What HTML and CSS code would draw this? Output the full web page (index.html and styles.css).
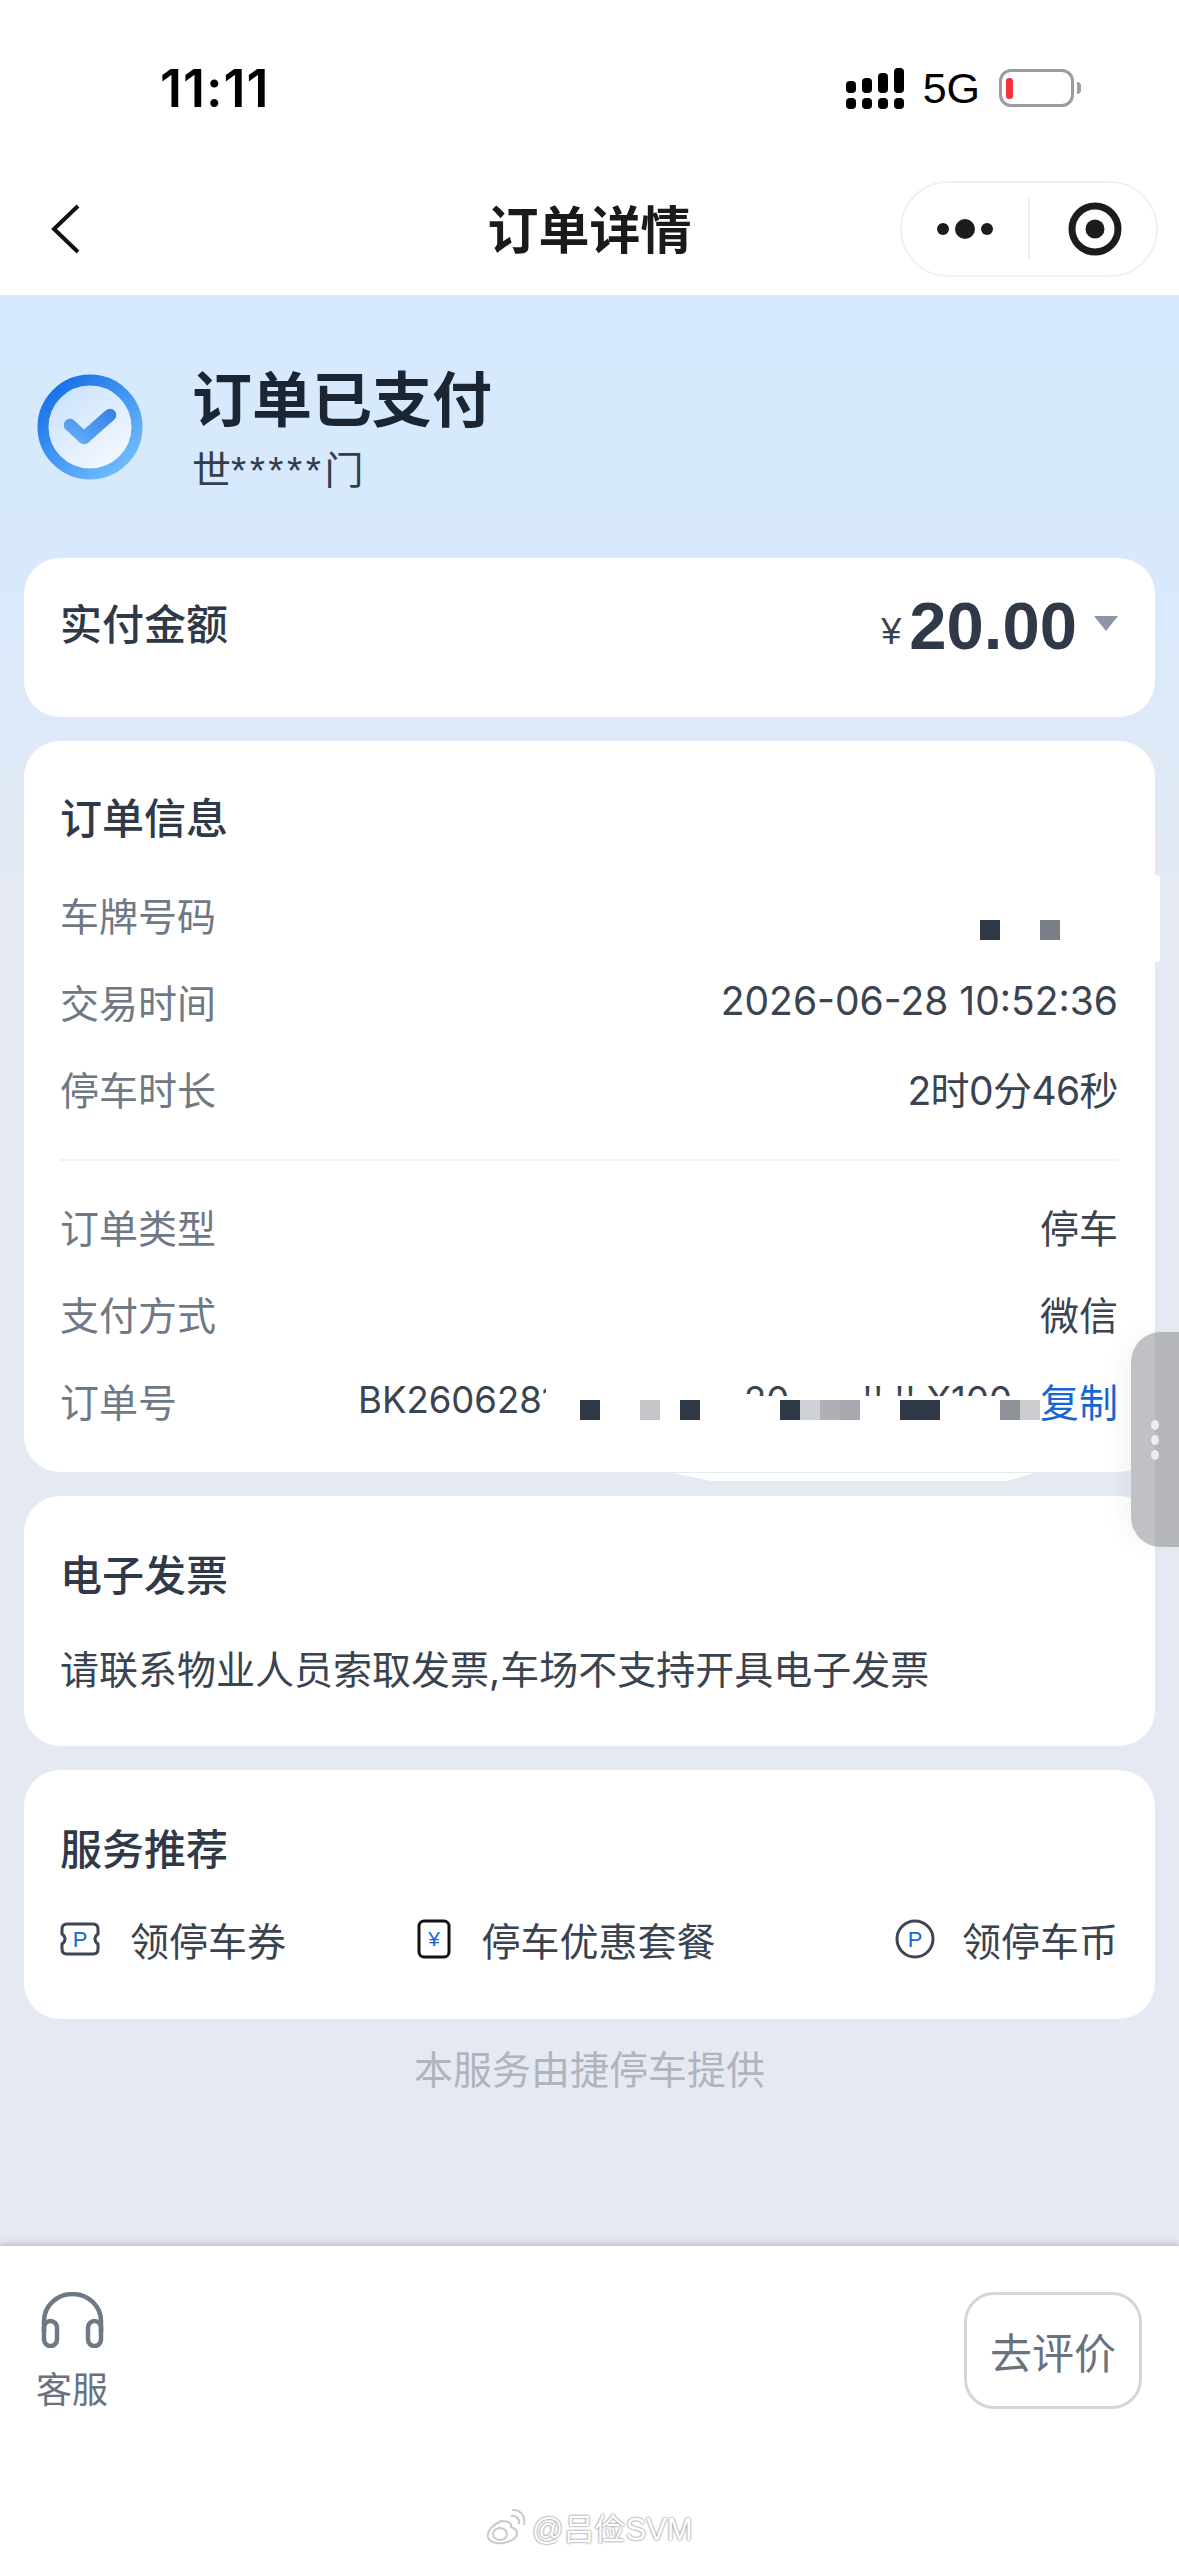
FILE: index.html
```html
<!DOCTYPE html>
<html lang="zh-CN">

<head>
    <meta charset="utf-8" />
    <meta name="viewport" content="width=device-width, initial-scale=1" />
    <title>订单详情</title>
    <link rel="stylesheet" href="styles.css">
</head>

<body>
    <div class="page">
        <header class="top">
            <div class="status">
                <div class="clock">11:11</div>
                <div class="status-right">
                    <svg class="signal" width="58" height="41" viewBox="0 0 58 41">
                        <rect x="0" y="30" width="10" height="11" rx="4" />
                        <rect x="16" y="30" width="10" height="11" rx="4" />
                        <rect x="32" y="30" width="10" height="11" rx="4" />
                        <rect x="48" y="30" width="10" height="11" rx="4" />
                        <rect x="0" y="13" width="10" height="12" rx="4" />
                        <rect x="16" y="10" width="10" height="15" rx="4" />
                        <rect x="32" y="5" width="10" height="20" rx="4" />
                        <rect x="48" y="0" width="10" height="25" rx="4" />
                    </svg>
                    <div class="network">5G</div>
                    <div class="battery">
                        <div class="battery-body"><div class="battery-level"></div></div>
                        <div class="battery-nub"></div>
                    </div>
                </div>
            </div>
            <nav class="nav">
                <svg class="back" width="30" height="50" viewBox="0 0 30 50">
                    <path d="M27 2 L3 25 L27 48" />
                </svg>
                <div class="nav-title">订单详情</div>
                <div class="capsule">
                    <svg class="capsule-icon" width="64" height="24" viewBox="0 0 64 24">
                        <circle cx="6" cy="12" r="6" />
                        <circle cx="28" cy="12" r="10" />
                        <circle cx="50" cy="12" r="6" />
                    </svg>
                    <div class="capsule-line"></div>
                    <svg class="capsule-icon" width="54" height="54" viewBox="0 0 54 54">
                        <circle class="ring" cx="27" cy="27" r="23" />
                        <circle cx="27" cy="27" r="9.5" />
                    </svg>
                </div>
            </nav>
        </header>

        <main class="content">
            <section class="hero">
                <svg class="hero-icon" width="106" height="106" viewBox="0 0 106 106">
                    <defs>
                        <linearGradient id="ringFill" x1="0.15" y1="0.1" x2="0.85" y2="0.9">
                            <stop offset="0" stop-color="#1b74ea" />
                            <stop offset="1" stop-color="#6dbafb" />
                        </linearGradient>
                        <linearGradient id="innerFill" x1="0.2" y1="0.1" x2="0.8" y2="0.9">
                            <stop offset="0" stop-color="#cbe2fd" />
                            <stop offset="1" stop-color="#f4f9ff" />
                        </linearGradient>
                        <linearGradient id="tickFill" x1="1" y1="0" x2="0" y2="1">
                            <stop offset="0" stop-color="#3a85e6" />
                            <stop offset="1" stop-color="#5eadf6" />
                        </linearGradient>
                    </defs>
                    <circle cx="53" cy="53" r="47" fill="url(#innerFill)" stroke="url(#ringFill)" stroke-width="11" />
                    <path d="M33 51 L47 64 L73 41" fill="none" stroke="url(#tickFill)" stroke-width="12.5" stroke-linecap="round" stroke-linejoin="round" />
                </svg>
                <div class="hero-text">
                    <div class="hero-title">订单已支付</div>
                    <div class="hero-sub">世<span class="stars">*****</span>门</div>
                </div>
            </section>

            <section class="card amount-card">
                <div class="card-title">实付金额</div>
                <div class="amount">
                    <span class="yen">¥</span>
                    <span class="amount-num">20.00</span>
                    <span class="caret"></span>
                </div>
            </section>

            <section class="card info-card">
                <div class="card-title">订单信息</div>
                <div class="rows">
                    <div class="row"><span class="label">车牌号码</span></div>
                    <div class="row"><span class="label">交易时间</span><span class="value">2026-06-28 10:52:36</span></div>
                    <div class="row"><span class="label">停车时长</span><span class="value value-tight">2时0分46秒</span></div>
                </div>
                <div class="divider"></div>
                <div class="rows">
                    <div class="row"><span class="label">订单类型</span><span class="value">停车</span></div>
                    <div class="row"><span class="label">支付方式</span><span class="value">微信</span></div>
                    <div class="row">
                        <span class="label label-order">订单号</span>
                        <span class="order-start">BK2606281</span>
                        <span class="order-cut">20 . . . '' '' X100</span>
                        <span class="copy">复制</span>
                    </div>
                </div>
            </section>

            <section class="card invoice-card">
                <div class="card-title">电子发票</div>
                <div class="card-line">请联系物业人员索取发票,车场不支持开具电子发票</div>
            </section>

            <section class="card service-card">
                <div class="card-title">服务推荐</div>
                <div class="services">
                    <div class="service">
                        <svg width="40" height="34" viewBox="0 0 40 34">
                            <path class="icon-line" d="M7 2 H33 Q38 2 38 7 V12 Q35 14 35 17 Q35 20 38 22 V27 Q38 32 33 32 H7 Q2 32 2 27 V22 Q5 20 5 17 Q5 14 2 12 V7 Q2 2 7 2 Z" />
                            <text class="icon-mark" x="20" y="25" font-size="22">P</text>
                        </svg>
                        <span class="service-name">领停车券</span>
                    </div>
                    <div class="service service-mid">
                        <svg width="34" height="40" viewBox="0 0 34 40">
                            <rect class="icon-dark" x="2" y="2" width="30" height="36" rx="5" />
                            <text class="icon-mark" x="17" y="27" font-size="21">¥</text>
                        </svg>
                        <span class="service-name">停车优惠套餐</span>
                    </div>
                    <div class="service service-last">
                        <svg width="40" height="40" viewBox="0 0 40 40">
                            <circle class="icon-line" cx="20" cy="20" r="18" />
                            <text class="icon-mark" x="20" y="28" font-size="22">P</text>
                        </svg>
                        <span class="service-name">领停车币</span>
                    </div>
                </div>
            </section>

            <div class="provider">本服务由捷停车提供</div>
        </main>

        <footer class="bar">
            <div class="kefu">
                <svg width="63" height="56" viewBox="0 0 63 56">
                    <path d="M3 40 V29 A28.5 27 0 0 1 60 29 V40" />
                    <rect x="3" y="29" width="13" height="25" rx="6.5" />
                    <rect x="47" y="29" width="13" height="25" rx="6.5" />
                </svg>
                <span>客服</span>
            </div>
            <div class="rate">去评价</div>
            <div class="watermark">
                <svg width="42" height="36" viewBox="0 0 42 36">
                    <path d="M16 12 C8 16 2 22 3 28 C4 33 11 35 18 34 C26 33 32 29 32 24 C32 20 28 19 26 18 C27 14 24 12 16 12 Z" />
                    <ellipse cx="15" cy="25" rx="7" ry="6" />
                    <path d="M26 7 C31 6 35 10 34 15" />
                    <path d="M27 1 C35 0 41 7 39 16" />
                </svg>
                <span>@吕俭SVM</span>
            </div>
        </footer>

        <!-- mosaic left on the screenshot, sits over the rows -->
        <svg class="mosaic mosaic-plate" width="80" height="20" viewBox="0 0 80 20">
            <rect x="0" width="20" height="20" fill="#2f3947" />
            <rect x="60" width="20" height="20" fill="#797e87" />
        </svg>
        <svg class="mosaic mosaic-order" width="460" height="20" viewBox="0 0 460 20">
            <rect x="0" width="20" height="20" fill="#2f3947" />
            <rect x="60" width="20" height="20" fill="#c3c5c9" />
            <rect x="100" width="20" height="20" fill="#2f3947" />
            <rect x="200" width="20" height="20" fill="#2f3947" />
            <rect x="220" width="20" height="20" fill="#cdd0d4" />
            <rect x="240" width="20" height="20" fill="#aeb0b6" />
            <rect x="260" width="20" height="20" fill="#a6a9af" />
            <rect x="320" width="40" height="20" fill="#2f3947" />
            <rect x="420" width="20" height="20" fill="#8f9298" />
            <rect x="440" width="20" height="20" fill="#cbcdd1" />
        </svg>
        <div class="patch-plate"></div>
        <div class="patch-order"></div>

        <div class="handle">
            <span></span>
            <span></span>
            <span></span>
        </div>
    </div>
</body>

</html>
```

FILE: styles.css
```css
* {
    box-sizing: border-box;
}

body {
    margin: 0;
    background: #fff;
    font-family: Inter, "Noto Sans CJK SC", sans-serif;
    color: #3a4350;
}

.page {
    position: relative;
    display: flex;
    flex-direction: column;
    width: 1179px;
    height: 2556px;
    overflow: hidden;
}

/* status bar + title bar */
.top {
    height: 295px;
    background: #fff;
}

.status {
    display: flex;
    justify-content: space-between;
    align-items: center;
    height: 176px;
    padding: 0 98px 0 160px;
    color: #000;
}

.clock {
    font-size: 52px;
    font-weight: 600;
    letter-spacing: 1px;
}

.status-right {
    display: flex;
    align-items: center;
}

.network {
    margin: 0 19px 0 19px;
    font-family: "Liberation Sans", sans-serif;
    font-size: 43px;
}

.battery {
    display: flex;
    align-items: center;
    gap: 3px;
}

.battery-body {
    display: flex;
    align-items: center;
    width: 75px;
    height: 38px;
    padding-left: 4px;
    border: 3px solid #9c9c9e;
    border-radius: 12px;
}

.battery-level {
    width: 7px;
    height: 21px;
    border-radius: 3px;
    background: #f0343c;
}

.battery-nub {
    width: 4px;
    height: 12px;
    border-radius: 0 4px 4px 0;
    background: #9c9c9e;
}

.nav {
    display: grid;
    grid-template-columns: 1fr auto 1fr;
    align-items: center;
    height: 106px;
    padding: 0 21px;
}

.back {
    margin-left: 30px;
}

.back path {
    fill: none;
    stroke: #111;
    stroke-width: 4;
}

.nav-title {
    margin-bottom: 5px;
    font-size: 51px;
    font-weight: 700;
    color: #1a1a1a;
}

.capsule {
    display: flex;
    align-items: center;
    justify-self: end;
    width: 258px;
    height: 96px;
    padding-left: 35px;
    border: 2px solid #f0f0f0;
    border-radius: 48px;
}

.capsule-icon {
    fill: #1c1c1c;
}

.capsule-icon .ring {
    fill: none;
    stroke: #1c1c1c;
    stroke-width: 7;
}

.capsule-line {
    width: 2px;
    height: 62px;
    margin: 0 38px 0 27px;
    background: #efefef;
}

/* main area */
.content {
    flex: 1;
    padding: 0 24px;
    background: linear-gradient(#d7e9fe 0, #d8e9fd 265px, #e5e9f2 620px);
}

.hero {
    display: flex;
    align-items: center;
    gap: 49px;
    height: 263px;
    padding-left: 13px;
}

.hero-text {
    padding-top: 9px;
}

.hero-title {
    margin-bottom: 6px;
    font-size: 60px;
    font-weight: 700;
    line-height: 72px;
    color: #1c2633;
}

.hero-sub {
    font-size: 39px;
    line-height: 56px;
    color: #333d4c;
}

.stars {
    letter-spacing: 3.5px;
    font-family: "Liberation Sans", sans-serif;
}

.card {
    margin-bottom: 24px;
    padding: 53px 37px 52px 36px;
    border-radius: 36px;
    background: #fff;
}

.card-title {
    font-size: 42px;
    font-weight: 500;
    line-height: 50px;
    color: #2f3947;
}

.card-line {
    margin-top: 44px;
    font-size: 39px;
    line-height: 50px;
}

.amount-card {
    display: flex;
    justify-content: space-between;
    align-items: flex-start;
    height: 159px;
    padding-top: 42px;
    padding-bottom: 0;
}

.amount {
    display: flex;
    align-items: center;
    height: 50px;
}

.yen {
    margin: 14px 8px 0 0;
    font-size: 36px;
    font-family: "Liberation Sans", sans-serif;
}

.amount-num {
    font-family: "Liberation Sans", sans-serif;
    font-size: 67px;
    font-weight: 700;
    color: #2f3947;
}

.caret {
    width: 0;
    height: 0;
    margin: 0 0 4px 17px;
    border-top: 15px solid #8c96a5;
    border-left: 12.5px solid transparent;
    border-right: 12.5px solid transparent;
}

.info-card {
    padding-bottom: 29px;
}

.rows {
    padding-top: 26px;
}

.divider + .rows {
    padding-top: 21px;
}

.row {
    display: flex;
    justify-content: space-between;
    align-items: center;
    height: 87px;
    font-size: 39px;
}

.label {
    color: #6f7986;
}

.value {
    color: #3a4350;
}

.value-tight {
    letter-spacing: -0.6px;
}

.divider {
    height: 2px;
    margin-top: 28px;
    background: #f1f2f5;
}

.label-order {
    width: 298px;
    flex: none;
}

.order-start {
    width: 188px;
    flex: none;
    overflow: hidden;
    font-size: 36.5px;
    white-space: nowrap;
}

.order-cut {
    flex: 1;
    margin-left: 198px;
    overflow: hidden;
    white-space: nowrap;
    font-size: 36.5px;
    clip-path: inset(0 0 58% 0);
}

.copy {
    flex: none;
    color: #1666d3;
}

.invoice-card {
    padding-top: 55px;
    padding-bottom: 51px;
}

.service-card {
    padding-top: 55px;
    padding-bottom: 55px;
}

.services {
    display: flex;
    justify-content: space-between;
    margin-top: 39px;
}

.service {
    display: flex;
    align-items: center;
    gap: 30px;
    height: 50px;
    font-size: 39px;
}

.service-mid {
    margin-right: 48px;
}

.service-last {
    gap: 27px;
}

.icon-line,
.icon-dark {
    fill: #fff;
    stroke: #3d4654;
    stroke-width: 3;
}

.icon-dark {
    stroke: #111;
    stroke-width: 3;
}

.icon-mark {
    fill: #1666d3;
    font-family: "Liberation Sans", sans-serif;
    text-anchor: middle;
}

.provider {
    margin-top: 26px;
    font-size: 39px;
    line-height: 50px;
    text-align: center;
    color: #b0b4bc;
}

/* bottom bar */
.bar {
    position: relative;
    display: flex;
    justify-content: space-between;
    align-items: flex-start;
    height: 310px;
    padding: 46px 37px 0 36px;
    background: #fff;
    box-shadow: 0 -2px 6px rgba(60, 60, 70, 0.28);
}

.kefu {
    display: flex;
    flex-direction: column;
    align-items: center;
    gap: 22px;
    font-size: 36px;
    line-height: 40px;
    color: #6a7280;
}

.kefu svg {
    fill: none;
    stroke: #6f7986;
    stroke-width: 4.5;
}

.rate {
    display: flex;
    justify-content: center;
    align-items: center;
    width: 178px;
    height: 117px;
    border: 3px solid #d5d6d8;
    border-radius: 30px;
    font-size: 42px;
    color: #6a7280;
}

.watermark {
    position: absolute;
    top: 258px;
    left: 485px;
    display: flex;
    align-items: center;
    gap: 5px;
    font-size: 31px;
    font-family: "Liberation Sans", "Noto Sans CJK SC", sans-serif;
    color: #fff;
    text-shadow: 0 0 2px #8f8f8f, 0 0 2px #8f8f8f;
}

.watermark svg {
    fill: #fff;
    stroke: #c9c9c9;
    stroke-width: 2;
}

.watermark svg path:nth-of-type(n+2) {
    fill: none;
}

/* things lying over the page */
.mosaic {
    position: absolute;
    z-index: 2;
    left: 580px;
    top: 1400px;
}

.mosaic-plate {
    left: 980px;
    top: 920px;
}

.patch-plate {
    position: absolute;
    left: 1150px;
    top: 875px;
    width: 10px;
    height: 87px;
    border-radius: 0 3px 3px 0;
    background: #fff;
}

.patch-order {
    position: absolute;
    left: 672px;
    top: 1473px;
    width: 363px;
    height: 8px;
    background: #fff;
    clip-path: polygon(0 0, 100% 0, 92% 100%, 11% 100%);
}

.handle {
    position: absolute;
    z-index: 3;
    left: 1131px;
    top: 1332px;
    display: flex;
    flex-direction: column;
    justify-content: center;
    align-items: flex-end;
    gap: 5px;
    width: 48px;
    height: 215px;
    padding-right: 20px;
    border-radius: 30px 0 0 30px;
    background: linear-gradient(90deg, #c0c1c5 24px, #b5b6bb 24px);
    box-shadow: -12px 0 18px rgba(0, 0, 0, 0.03);
}

.handle span {
    width: 8px;
    height: 10px;
    border-radius: 50%;
    background: #eceded;
}
```
